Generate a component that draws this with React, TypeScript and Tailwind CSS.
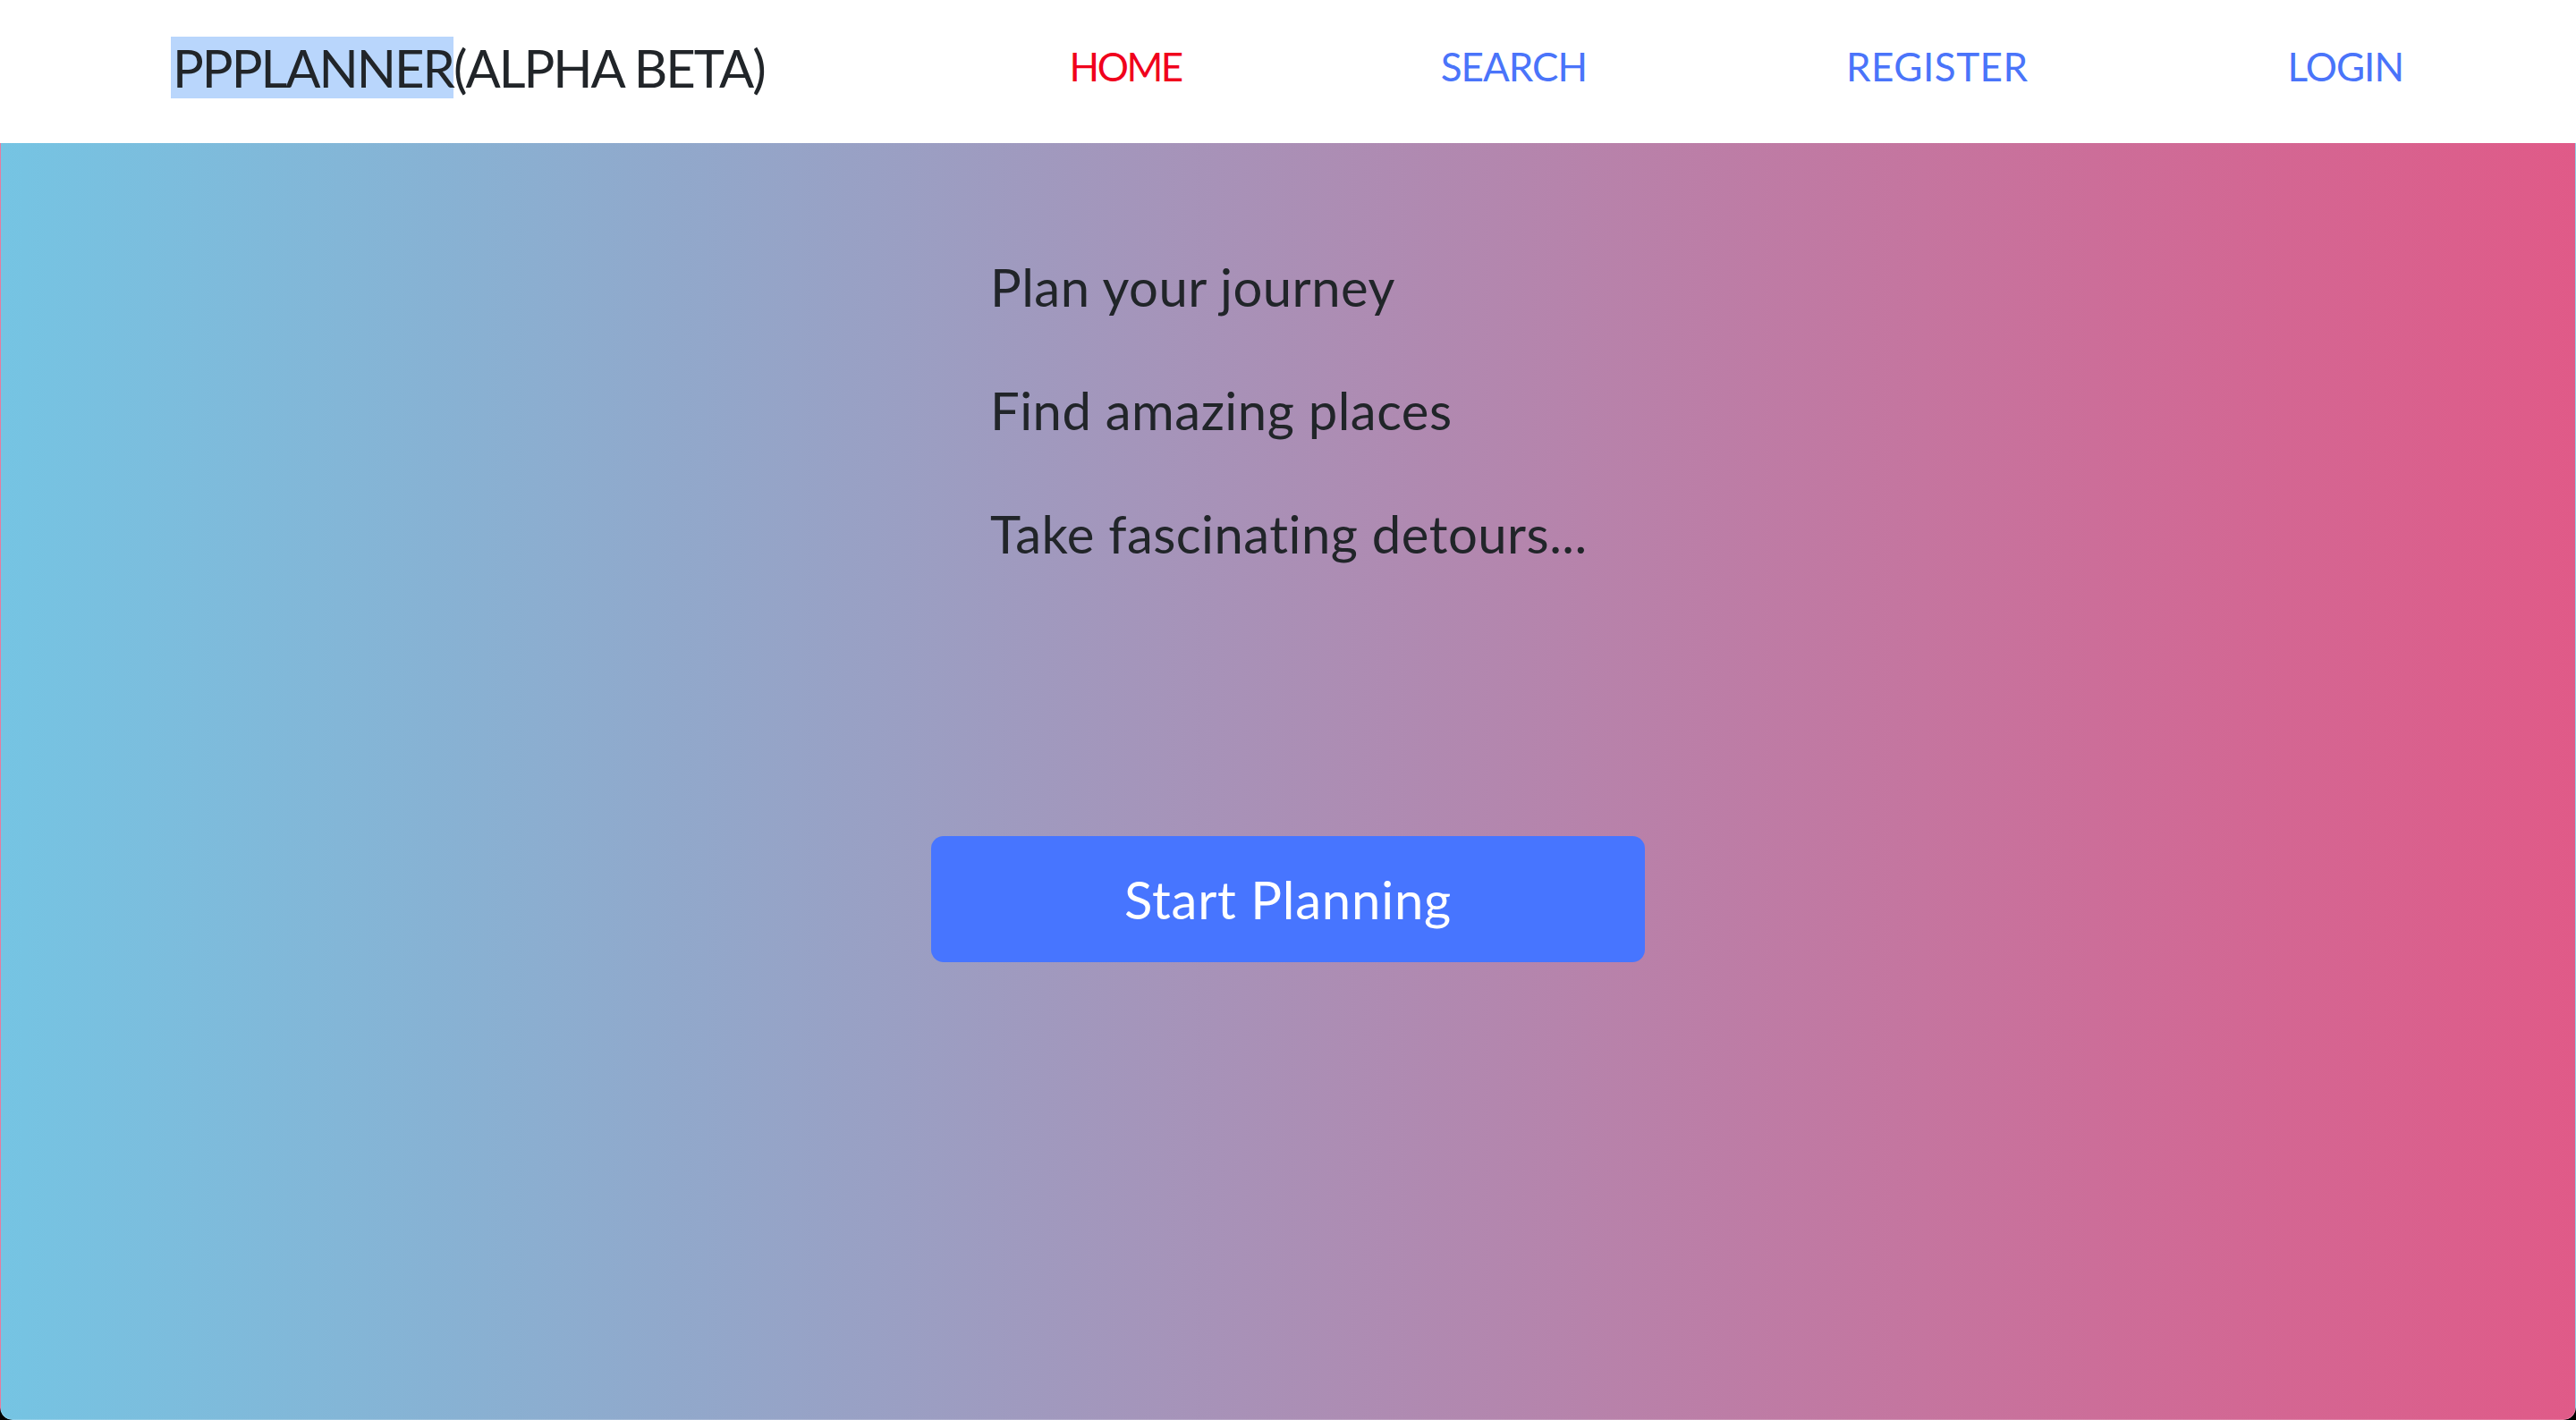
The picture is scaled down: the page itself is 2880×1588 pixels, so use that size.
import React from "react";

export default function App() {
  const font = { fontFamily: "Lato, 'Open Sans', sans-serif" } as React.CSSProperties;
  return (
    <div className="w-full h-screen bg-black" style={font}>
      <div className="w-full h-full flex flex-col rounded-b-[14px] overflow-hidden">
        <header className="h-[160px] bg-white flex items-center shrink-0">
          <div className="ml-[191px] text-[58px] tracking-[-2px] text-[#212529] leading-[70px] pb-[8px]">
            <span className="bg-[#b9d6fc] pl-[2px]">PPPLANNER</span>(ALPHA BETA)
          </div>
          <nav className="ml-auto mr-[193px] flex items-center gap-[290px] text-[44px] pb-[12px]">
            <a className="text-[#f0001c] tracking-[-2.5px]">HOME</a>
            <a className="text-[#4a74fa] tracking-[-1px]">SEARCH</a>
            <a className="text-[#4a74fa] tracking-[0.5px]">REGISTER</a>
            <a className="text-[#4a74fa] tracking-[-1px]">LOGIN</a>
          </nav>
        </header>
        <main className="flex-1 bg-[linear-gradient(to_right,#75c4e3,#e05a88)] border-x border-b border-white/20 rounded-b-[14px] pt-[92px]">
          <div className="w-[798px] mx-auto">
            <div className="pl-[66px] text-[58px] tracking-[0.5px] leading-[138px] text-[#212529]">
              <div>Plan your journey</div>
              <div>Find amazing places</div>
              <div>Take fascinating detours...</div>
            </div>
            <button className="mt-[269px] w-[798px] h-[141px] rounded-[14px] bg-[#4775ff] text-white text-[58px] tracking-[0.8px] flex items-center justify-center">
              Start Planning
            </button>
          </div>
        </main>
      </div>
    </div>
  );
}
